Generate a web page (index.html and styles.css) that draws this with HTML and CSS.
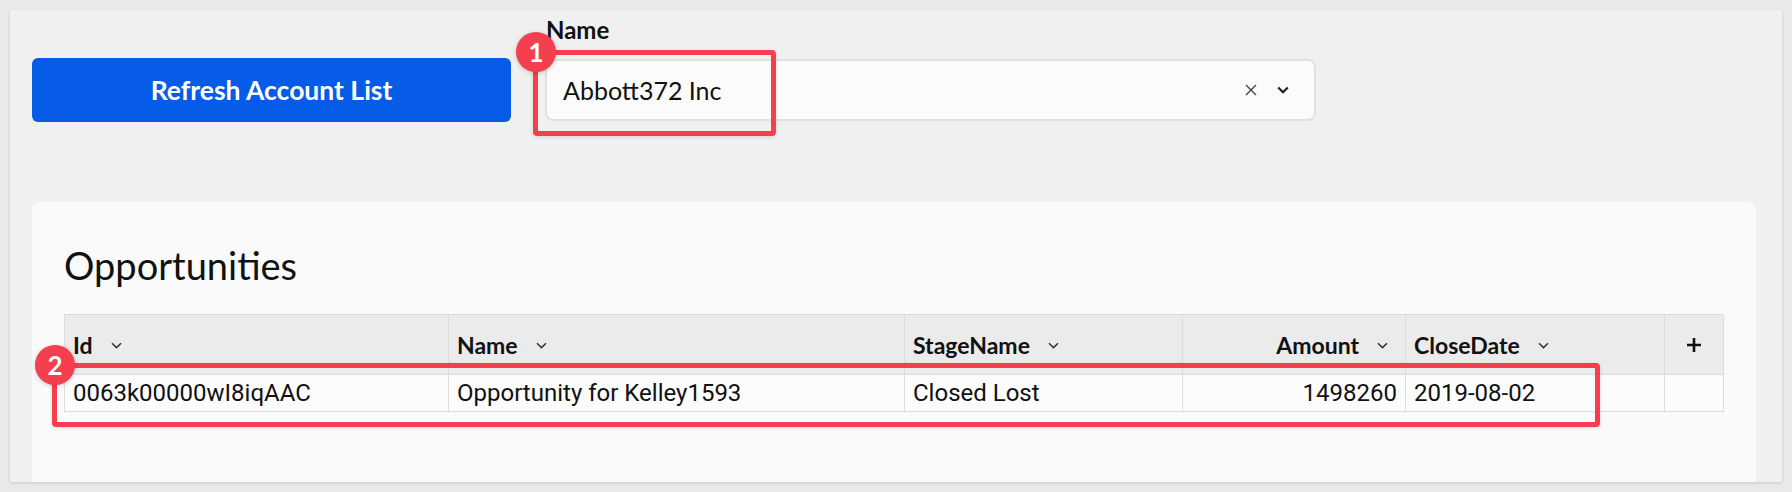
FILE: index.html
```html
<!DOCTYPE html>
<html>
<head>
<meta charset="utf-8">
<link rel="stylesheet" href="styles.css">
</head>
<body>
<div class="panel">
  <div class="controls">
    <button class="refresh">Refresh Account List</button>
    <div class="field">
      <div class="field-label">Name</div>
      <div class="select">
        <span class="select-value">Abbott372 Inc</span>
        <span class="select-icons">
          <svg class="ico-x" width="12" height="12" viewBox="0 0 12 12"><path d="M1 1L11 11M11 1L1 11" stroke="#444" stroke-width="1.4" fill="none"/></svg>
          <svg class="ico-chev" width="12" height="8" viewBox="0 0 12 8"><path d="M1.2 1.5L6 6.2L10.8 1.5" stroke="#1e1e1e" stroke-width="2.2" fill="none"/></svg>
        </span>
      </div>
    </div>
  </div>
  <div class="card">
    <h2 class="card-title">Opportunities</h2>
    <div class="grid">
      <div class="hcell"><span>Id</span><svg class="hchev" width="11" height="7" viewBox="0 0 11 7"><path d="M1 1.2L5.5 5.6L10 1.2" stroke="#333" stroke-width="1.5" fill="none"/></svg></div>
      <div class="hcell"><span>Name</span><svg class="hchev" width="11" height="7" viewBox="0 0 11 7"><path d="M1 1.2L5.5 5.6L10 1.2" stroke="#333" stroke-width="1.5" fill="none"/></svg></div>
      <div class="hcell"><span>StageName</span><svg class="hchev" width="11" height="7" viewBox="0 0 11 7"><path d="M1 1.2L5.5 5.6L10 1.2" stroke="#333" stroke-width="1.5" fill="none"/></svg></div>
      <div class="hcell right"><span>Amount</span><svg class="hchev" width="11" height="7" viewBox="0 0 11 7"><path d="M1 1.2L5.5 5.6L10 1.2" stroke="#333" stroke-width="1.5" fill="none"/></svg></div>
      <div class="hcell"><span>CloseDate</span><svg class="hchev" width="11" height="7" viewBox="0 0 11 7"><path d="M1 1.2L5.5 5.6L10 1.2" stroke="#333" stroke-width="1.5" fill="none"/></svg></div>
      <div class="hcell center"><svg width="16" height="16" viewBox="0 0 16 16"><path d="M8 1V15M1 8H15" stroke="#111" stroke-width="2.6" fill="none"/></svg></div>

      <div class="dcell">0063k00000wI8iqAAC</div>
      <div class="dcell">Opportunity for Kelley1593</div>
      <div class="dcell">Closed Lost</div>
      <div class="dcell right">1498260</div>
      <div class="dcell">2019-08-02</div>
      <div class="dcell"></div>
    </div>
  </div>
</div>

<div class="mark mark-1"></div>
<div class="badge badge-1">1</div>
<div class="mark mark-2"></div>
<div class="badge badge-2">2</div>
</body>
</html>
```

FILE: styles.css
```css
html, body {
  margin: 0;
  padding: 0;
}
body {
  background: #e9e9e9;
  width: 1792px;
  height: 492px;
  overflow: hidden;
  position: relative;
  font-family: "Lato", "Noto Sans", sans-serif;
  color: #111;
}
.panel {
  margin: 10px 10px 0 10px;
  height: 472px;
  background: #f0f0f0;
  box-shadow: 0 1px 3px rgba(0,0,0,0.14);
  overflow: hidden;
  padding: 0 26px 0 22px;
  box-sizing: border-box;
}
.controls {
  display: flex;
  align-items: flex-start;
  gap: 34px;
}
.refresh {
  margin-top: 48px;
  width: 479px;
  height: 64px;
  border: none;
  border-radius: 6px;
  background: #065ce6;
  color: #fff;
  font-family: "Lato", "Noto Sans", sans-serif;
  font-weight: 700;
  font-size: 26.5px;
  padding: 0;
  cursor: pointer;
}
.field {
  display: flex;
  flex-direction: column;
}
.field-label {
  margin-top: 8px;
  font-weight: 700;
  font-size: 24px;
  line-height: 24px;
  padding-left: 1px;
  color: #111;
}
.select {
  margin-top: 17px;
  width: 771px;
  height: 62px;
  box-sizing: border-box;
  border: 2px solid #e1e1e1;
  border-radius: 8px;
  background: #fbfbfb;
  display: flex;
  align-items: center;
  justify-content: space-between;
  padding: 0 25px 0 16px;
}
.select-value {
  font-size: 25px;
  color: #111;
}
.select-icons {
  display: flex;
  align-items: center;
  gap: 20px;
}
.card {
  margin-top: 80px;
  background: #fafafa;
  border-radius: 8px 8px 0 0;
  height: 320px;
  padding: 41px 33px 0 32px;
  box-sizing: border-box;
}
.card-title {
  margin: 0;
  font-weight: 400;
  font-size: 38px;
  line-height: 44px;
  color: #111;
}
.grid {
  margin-top: 27px;
  display: grid;
  grid-template-columns: 384px 456px 278px 223px 259px 59px;
  grid-template-rows: 60px 37px;
  border-top: 1px solid #dcdcdc;
  border-left: 1px solid #dcdcdc;
  width: 1659px;
  box-sizing: border-box;
}
.hcell, .dcell {
  border-right: 1px solid #dcdcdc;
  border-bottom: 1px solid #dcdcdc;
  display: flex;
  align-items: center;
  padding: 0 8px;
  box-sizing: border-box;
  min-width: 0;
}
.hcell {
  background: #ebebeb;
  font-weight: 700;
  font-size: 23px;
  color: #111;
}
.hcell.right, .dcell.right {
  justify-content: flex-end;
}
.hcell.center {
  justify-content: center;
  padding: 0;
}
.hchev {
  margin: 2px 9px 0 18px;
  flex: none;
}
.dcell {
  background: #fcfcfc;
  font-family: "Roboto", "Liberation Sans", sans-serif;
  font-size: 24px;
  color: #111;
}
.mark {
  position: absolute;
  border: 5px solid #f73e4d;
  border-radius: 4px;
  box-sizing: border-box;
  box-shadow: 0 1px 4px rgba(0,0,0,0.12);
}
.mark-1 {
  left: 533px;
  top: 50px;
  width: 243px;
  height: 86px;
}
.mark-2 {
  left: 52px;
  top: 363px;
  width: 1548px;
  height: 64px;
}
.badge {
  position: absolute;
  width: 40px;
  height: 40px;
  border-radius: 50%;
  background: #f43f4f;
  color: #fff;
  font-family: "Lato", "Noto Sans", sans-serif;
  font-weight: 700;
  font-size: 26px;
  display: flex;
  align-items: center;
  justify-content: center;
  box-shadow: 0 1px 4px rgba(0,0,0,0.2);
}
.badge-1 {
  left: 516px;
  top: 32px;
}
.badge-2 {
  left: 35px;
  top: 345px;
}
```
